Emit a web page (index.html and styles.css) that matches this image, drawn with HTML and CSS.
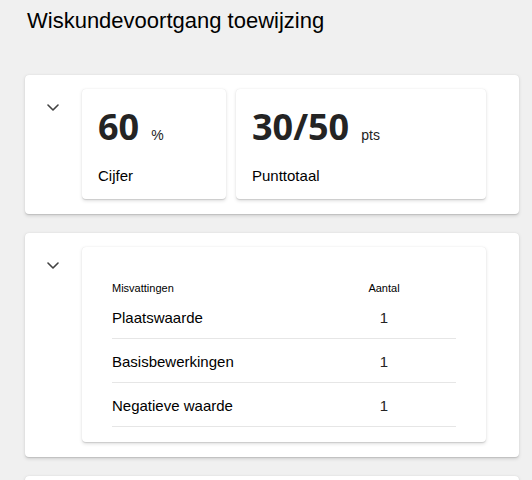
FILE: index.html
```html
<!DOCTYPE html>
<html lang="nl">
<head>
<meta charset="utf-8">
<title>Wiskundevoortgang toewijzing</title>
<link rel="stylesheet" href="styles.css">
</head>
<body>
<div class="page">
  <h1 class="title">Wiskundevoortgang toewijzing</h1>

  <section class="panel">
    <div class="toggle">
      <svg class="chev" width="12" height="7" viewBox="0 0 12 7"><path d="M1 1 L6 6 L11 1" fill="none" stroke="#424242" stroke-width="1.6" stroke-linecap="round" stroke-linejoin="round"/></svg>
    </div>
    <div class="panel-body stats">
      <div class="card stat stat-grade">
        <div class="stat-value"><span class="num">60</span><span class="unit">%</span></div>
        <div class="stat-label">Cijfer</div>
      </div>
      <div class="card stat stat-points">
        <div class="stat-value"><span class="num">30/50</span><span class="unit">pts</span></div>
        <div class="stat-label">Punttotaal</div>
      </div>
    </div>
  </section>

  <section class="panel">
    <div class="toggle">
      <svg class="chev" width="12" height="7" viewBox="0 0 12 7"><path d="M1 1 L6 6 L11 1" fill="none" stroke="#424242" stroke-width="1.6" stroke-linecap="round" stroke-linejoin="round"/></svg>
    </div>
    <div class="panel-body">
      <div class="card table-card">
        <div class="trow thead">
          <div class="c1">Misvattingen</div>
          <div class="c2">Aantal</div>
        </div>
        <div class="trow">
          <div class="c1">Plaatswaarde</div>
          <div class="c2">1</div>
        </div>
        <div class="trow">
          <div class="c1">Basisbewerkingen</div>
          <div class="c2">1</div>
        </div>
        <div class="trow">
          <div class="c1">Negatieve waarde</div>
          <div class="c2">1</div>
        </div>
      </div>
    </div>
  </section>

  <section class="panel panel-empty"></section>
</div>
</body>
</html>
```

FILE: styles.css
```css
html, body {
  margin: 0;
  padding: 0;
  background: #f0f0f0;
}
body {
  font-family: "Liberation Sans", Arial, sans-serif;
  color: #242424;
  height: 480px;
  overflow: hidden;
}
.page {
  padding: 7px 13px 0 25px;
  display: flex;
  flex-direction: column;
}
.title {
  margin: 0 0 40px 2px;
  font-size: 22px;
  line-height: 28px;
  font-weight: normal;
  color: #000;
}
.panel {
  background: #fff;
  border-radius: 4px;
  box-shadow: 0 1.6px 3.6px rgba(0,0,0,0.13), 0 0.3px 0.9px rgba(0,0,0,0.11);
  display: flex;
  padding: 14px 33px 15px 0;
  margin-bottom: 19px;
}
.toggle {
  width: 57px;
  flex: none;
  padding: 15px 0 0 22px;
  box-sizing: border-box;
}
.chev { display: block; }
.panel-body {
  flex: 1;
  display: flex;
}
.stats { gap: 10px; }
.card {
  background: #fff;
  border-radius: 4px;
  box-shadow: 0 1.6px 3.6px rgba(0,0,0,0.13), 0 0.3px 0.9px rgba(0,0,0,0.11);
  box-sizing: border-box;
}
.stat {
  height: 110px;
  padding: 18px 16px 0 16px;
}
.stat-grade { width: 144px; }
.stat-points { width: 250px; }
.stat-value {
  display: flex;
  align-items: baseline;
  height: 40px;
  line-height: 40px;
  white-space: nowrap;
}
.num {
  font-family: "Open Sans", "Liberation Sans", sans-serif;
  font-size: 36px;
  font-weight: bold;
  color: #242424;
}
.unit {
  font-size: 14px;
  margin-left: 12px;
  color: #242424;
}
.stat-label {
  margin-top: 19px;
  font-size: 15px;
  line-height: 20px;
  color: #000;
}
.table-card {
  flex: 1;
  padding: 34px 30px 15px 30px;
}
.trow {
  display: grid;
  grid-template-columns: 200px 1fr;
  font-size: 15px;
  line-height: 20px;
  padding: 13px 0 10px;
  border-bottom: 1px solid #e6e6e6;
  color: #000;
}
.trow .c2 { text-align: center; color: #242424; }
.thead {
  font-size: 11px;
  line-height: 14px;
  padding: 0;
  border-bottom: none;
}
.thead .c2 { color: #000; }
.panel-empty {
  height: 60px;
  padding: 0;
}
```
